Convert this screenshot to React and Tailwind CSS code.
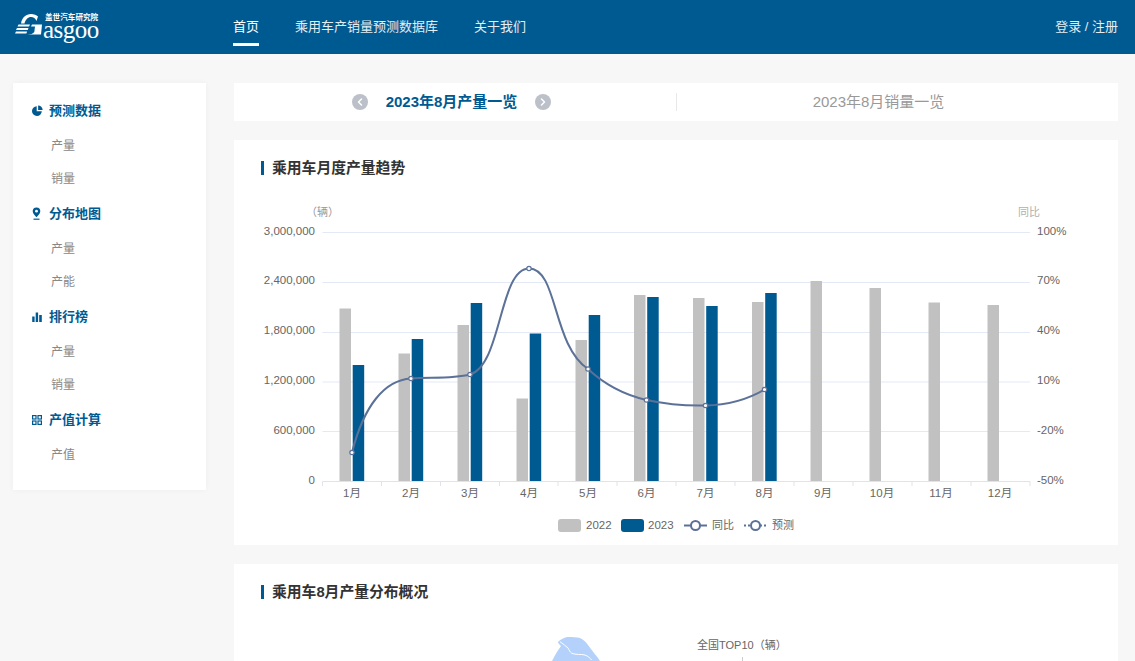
import { ChevronLeft, ChevronRight } from "lucide-react";

const yLeft = ["3,000,000", "2,400,000", "1,800,000", "1,200,000", "600,000", "0"];
const yRight = ["100%", "70%", "40%", "10%", "-20%", "-50%"];
const gridY = [232.5, 282.5, 332.5, 382, 431.5];
const months = ["1月", "2月", "3月", "4月", "5月", "6月", "7月", "8月", "9月", "10月", "11月", "12月"];
const centers = [352, 411, 470, 529, 588, 646.5, 705.5, 764.5, 823, 882, 941, 1000];
const gray = [308.5, 353.5, 325, 398.5, 340, 295, 298, 302, 281, 288, 302.5, 305];
const blue = [365, 339, 303, 333.5, 315, 297, 306, 293];
const points = [[352, 452.5], [411, 378.5], [470, 374.5], [529, 268.5], [588, 369], [646.5, 400], [705.5, 405.5], [764.5, 389.5]];
const ticks = [322.5, 381.5, 440.5, 499.5, 558, 617, 676, 735, 794, 853, 912, 971, 1030];

const PieIcon = () => (
  <svg width="11" height="11" viewBox="0 0 11 11" fill="#005a92">
    <path d="M4.7 1.2v5.1h5.1A4.9 4.9 0 1 1 4.7 1.2z" />
    <path d="M6.1 0.4a4.6 4.6 0 0 1 4.5 4.6H6.1z" />
  </svg>
);

const PinIcon = () => (
  <svg width="9" height="13" viewBox="0 0 9 13">
    <path d="M4.5 0.5a3.8 3.8 0 0 1 3.8 3.8c0 2.3-2.4 4.6-3.8 6-1.4-1.4-3.8-3.7-3.8-6A3.8 3.8 0 0 1 4.5 0.5z" fill="#005a92" />
    <circle cx="4.5" cy="4.2" r="1.4" fill="#fff" />
    <rect x="1.5" y="11.6" width="6" height="1.2" fill="#005a92" />
  </svg>
);

const BarsIcon = () => (
  <svg width="10" height="10" viewBox="0 0 10 10" fill="#005a92">
    <rect x="0.2" y="4.5" width="2.4" height="5.5" />
    <rect x="3.7" y="0.5" width="2.4" height="9.5" />
    <rect x="7.2" y="3" width="2.6" height="7" />
  </svg>
);

const GridIcon = () => (
  <svg width="10" height="10" viewBox="0 0 10 10" fill="none" stroke="#005a92" strokeWidth="1.2">
    <rect x="0.6" y="0.6" width="3.4" height="3.4" />
    <rect x="6" y="0.6" width="3.4" height="3.4" />
    <rect x="0.6" y="6" width="3.4" height="3.4" />
    <rect x="6" y="6" width="3.4" height="3.4" />
  </svg>
);

const menu = [
  { title: "预测数据", icon: <PieIcon />, items: ["产量", "销量"] },
  { title: "分布地图", icon: <PinIcon />, items: ["产量", "产能"] },
  { title: "排行榜", icon: <BarsIcon />, items: ["产量", "销量"] },
  { title: "产值计算", icon: <GridIcon />, items: ["产值"] },
];

const Logo = () => (
  <div className="relative w-[86px] h-[28px]">
    <svg className="absolute left-0 top-0" width="30" height="24" viewBox="0 0 30 24" fill="#fff">
      <path d="M6 10.5C7 4.5 11 1 16 1c3 0 5.5 1 7 2.5L21.5 8C20.500 5.500 18.500 4 16 4c-3 0-5.500 2.500-6.500 6.500z" />
      <path d="M3.5 11.5H15l-1 2H2.5z" />
      <path d="M2 15h11.5l-.8 2H1z" />
      <path d="M1 18.5h11l-.6 2H0z" />
      <path d="M17 11.5h10l-1 10H12.5c3 0 5.800-.8 6.800-2.500l.7-5.500h-4z" />
    </svg>
    <span className="absolute left-[30px] top-[1px] text-[8px] leading-[6px] font-bold whitespace-nowrap text-white [font-family:'Noto_Sans_CJK_SC',sans-serif] scale-x-95 origin-left">
      盖世汽车研究院
    </span>
    <span className="absolute left-[28px] top-[11px] text-[25px] leading-[12px] tracking-[-0.5px] text-white [font-family:'Liberation_Serif',serif]">
      asgoo
    </span>
  </div>
);

const Sidebar = () => (
  <aside className="w-[193px] h-[407px] shrink-0 bg-white shadow-[0_0_6px_rgba(0,0,0,0.04)] pt-[9px]">
    {menu.map((group) => (
      <div key={group.title}>
        <div className="flex items-center h-[37px]">
          <span className="w-[36px] pl-[19px] flex items-center">{group.icon}</span>
          <span className="text-[13px] font-bold text-[#005a92]">{group.title}</span>
        </div>
        {group.items.map((item) => (
          <div key={item} className="h-[33px] pl-[38px] flex items-center text-xs text-[#888888]">
            {item}
          </div>
        ))}
      </div>
    ))}
  </aside>
);

const Title = ({ children }) => (
  <div className="flex items-center gap-[8px] pl-[27px] h-[20px] text-[14.8px] font-bold text-[#333333]">
    <span className="w-[3px] h-[14px] bg-[#005a92]" />
    {children}
  </div>
);

const TrendChart = () => (
  <svg className="block mt-[17px]" width="884" height="345" viewBox="234 195 884 345">
    <g fontSize="11.5" fill="#666666">
      {gridY.map((y) => (
        <line key={y} x1="322.5" x2="1030" y1={y} y2={y} stroke="#e3eaf5" />
      ))}
      <line x1="322.5" x2="1030" y1="481.5" y2="481.5" stroke="#dfe3ec" />
      {ticks.map((x) => (
        <line key={x} x1={x} x2={x} y1="481.5" y2="486" stroke="#dfe3ec" />
      ))}
      {gray.map((y, i) => (
        <rect key={i} x={centers[i] - 12.5} y={y} width="11.5" height={481 - y} fill="#c1c1c1" />
      ))}
      {blue.map((y, i) => (
        <rect key={i} x={centers[i] + 0.7} y={y} width="11.5" height={481 - y} fill="#005a92" />
      ))}
      <path
        d="M352 452.5C364 405 385 380 411 378.5C430 377 452 379 470 374.5C502 365 499 268.5 529 268.5C558 268.5 552 345 588 369C605 385 625 395 646.5 400C665 404 685 406 705.5 405.5C725 405 745 401 764.5 389.5"
        fill="none"
        stroke="#5b7198"
        strokeWidth="2"
      />
      {points.map(([x, y]) => (
        <circle key={x} cx={x} cy={y} r="2.2" fill="#fff" stroke="#5b7198" strokeWidth="1.2" />
      ))}
      {yLeft.map((t, i) => (
        <text key={t} x="315" y={234.5 + i * 49.8} textAnchor="end">{t}</text>
      ))}
      {yRight.map((t, i) => (
        <text key={t} x="1037" y={234.5 + i * 49.8}>{t}</text>
      ))}
      {months.map((m, i) => (
        <text key={m} x={centers[i]} y="497" textAnchor="middle">{m}</text>
      ))}
      <text x="306" y="216" fill="#999999" fontSize="11">（辆）</text>
      <text x="1018" y="216" fill="#b0b0b0" fontSize="11">同比</text>

      <rect x="558" y="519" width="23" height="13" rx="3" fill="#c1c1c1" />
      <text x="586" y="529">2022</text>
      <rect x="621" y="519" width="23" height="13" rx="3" fill="#005a92" />
      <text x="648" y="529">2023</text>
      <line x1="684" x2="707" y1="525.5" y2="525.5" stroke="#5b7198" strokeWidth="2" />
      <circle cx="695.5" cy="525.5" r="4.5" fill="#fff" stroke="#5b7198" strokeWidth="2" />
      <text x="712" y="529" fontSize="11">同比</text>
      <line x1="744" x2="767" y1="525.5" y2="525.5" stroke="#5b7198" strokeWidth="2" strokeDasharray="2 2" />
      <circle cx="755.5" cy="525.5" r="4.5" fill="#fff" stroke="#5b7198" strokeWidth="2" />
      <text x="772" y="529" fontSize="11">预测</text>
    </g>
  </svg>
);

const MapPreview = () => (
  <div className="flex pl-[316px] mt-[35px] h-[60px]">
    <svg width="56" height="24" viewBox="0 0 56 24">
      <path d="M2 24C5 18 8 13 11 9C9 7 8 6 8 5C11 2 14 1 17 0C23 0 27 0 30 1C34 3 36 5 38 8C42 14 47 19 50 24Z" fill="#b3d1fb" />
      <path d="M10 4.7C13 7 16 9 18.3 11.3C19 13 20 15 21.7 16.3C26 18 31 17 35 18C38 19 40 21 41.7 23" fill="none" stroke="#fff" strokeWidth="1" />
    </svg>
    <div className="relative ml-[91px] mt-[3px] h-[20px] text-[11px] leading-[11px] text-[#666666] whitespace-nowrap">
      全国TOP10（辆）
      <span className="absolute left-[45px] top-[17px] w-px h-[8px] bg-[#cccccc]" />
    </div>
  </div>
);

export default function App() {
  return (
    <div className="h-[661px] overflow-hidden bg-[#f7f7f7] [font-family:'Liberation_Sans','Noto_Sans_CJK_SC',sans-serif]">
      <header className="h-[54px] bg-[#005a92] flex items-center pl-[15px] pr-[17px] text-white">
        <Logo />
        <nav className="flex gap-[36px] ml-[132px] h-full text-[13px]">
          <a className="relative flex items-center text-white">
            首页
            <span className="absolute left-0 right-0 bottom-[8px] h-[3px] bg-white" />
          </a>
          <a className="flex items-center text-[#e4edf3]">乘用车产销量预测数据库</a>
          <a className="flex items-center text-[#e4edf3]">关于我们</a>
        </nav>
        <div className="ml-auto text-[13px] text-[#e4edf3]">登录 / 注册</div>
      </header>

      <div className="flex gap-[28px] pl-[13px] pr-[17px] pt-[29px]">
        <Sidebar />
        <main className="flex-1 flex flex-col gap-[19px] min-w-0">
          <div className="h-[38px] bg-white flex items-center">
            <div className="w-[443px] h-[18px] flex items-center justify-center gap-[18px] pr-[7px] border-r border-[#e8e8e8]">
              <span className="w-4 h-4 rounded-full bg-[#bcc0c8] flex items-center justify-center">
                <ChevronLeft size={12} color="#fff" strokeWidth={3} />
              </span>
              <span className="text-[15px] font-bold text-[#005a92]">2023年8月产量一览</span>
              <span className="w-4 h-4 rounded-full bg-[#bcc0c8] flex items-center justify-center">
                <ChevronRight size={12} color="#fff" strokeWidth={3} />
              </span>
            </div>
            <div className="flex-1 pr-[38px] text-center text-[15px] text-[#999999]">2023年8月销量一览</div>
          </div>

          <section className="h-[405px] bg-white pt-[18px]">
            <Title>乘用车月度产量趋势</Title>
            <TrendChart />
          </section>

          <section className="h-[120px] bg-white pt-[18px]">
            <Title>乘用车8月产量分布概况</Title>
            <MapPreview />
          </section>
        </main>
      </div>
    </div>
  );
}
